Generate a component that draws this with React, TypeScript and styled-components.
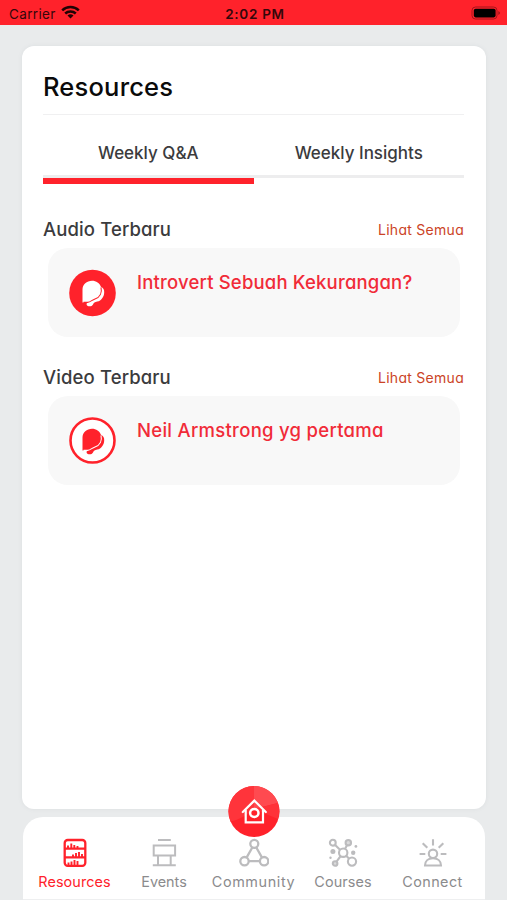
import React from "react";
import styled, { createGlobalStyle } from "styled-components";

const RED = "#ff222b";

const GlobalStyle = createGlobalStyle`
  * { box-sizing: border-box; }
  html, body { margin: 0; background: #e9ebec; }
  body {
    font-family: Inter, "Liberation Sans", sans-serif;
    font-feature-settings: "cv11" 1;
    color: #3b3b3d;
  }
  h1, h2, p { margin: 0; }
`;

const Screen = styled.div`
  width: 507px;
  height: 900px;
  overflow: hidden;
  display: flex;
  flex-direction: column;
  background: #e9ebec;
`;

const StatusBar = styled.header`
  height: 25px;
  flex: none;
  display: grid;
  grid-template-columns: 1fr auto 1fr;
  align-items: center;
  padding: 2px 6px 0 9px;
  background: ${RED};
  color: #35070a;
  font-size: 13.5px;
  line-height: 20px;
`;

const Carrier = styled.span`
  display: flex;
  align-items: center;
  gap: 5px;
  font-feature-settings: normal;
  letter-spacing: 0.35px;
  svg { margin-top: -3px; }
`;

const Clock = styled.span`
  font-weight: 600;
  font-size: 13.5px;
  letter-spacing: 0.7px;
`;

const Battery = styled.svg`
  justify-self: end;
  margin-top: -2px;
`;

const Sheet = styled.main`
  margin: 21px 22px 0;
  width: 463.5px;
  height: 763px;
  flex: none;
  padding: 0 21.5px 0 21px;
  background: #fff;
  border-radius: 12px;
  box-shadow: 0 0 4px rgba(120, 130, 135, 0.1);
`;

const Spaced = styled.span<{ $ls?: number }>`
  letter-spacing: ${(p) => p.$ls ?? 0}px;
  white-space: nowrap;
`;

const PageTitle = styled.h1`
  height: 69px;
  padding-top: 23px;
  border-bottom: 1px solid #f0f0f1;
  font-size: 25.5px;
  line-height: 36px;
  font-weight: 500;
  color: #0a0a0a;
`;

const Tabs = styled.nav`
  display: grid;
  grid-template-columns: 1fr 1fr;
  height: 69px;
`;

const Tab = styled.div<{ $active?: boolean }>`
  position: relative;
  height: 63px;
  padding-top: 25px;
  border-bottom: 3px solid #ededee;
  text-align: center;
  font-size: 17px;
  line-height: 26px;
  font-weight: 500;
  &::after {
    content: "";
    display: ${(p) => (p.$active ? "block" : "none")};
    position: absolute;
    left: 0;
    right: 0;
    bottom: -9px;
    height: 6px;
    background: ${RED};
  }
`;

const Section = styled.section`
  height: 148px;
  padding-top: 31px;
`;

const SectionHead = styled.div`
  display: flex;
  justify-content: space-between;
  align-items: center;
  height: 28px;
`;

const SectionTitle = styled.h2`
  font-size: 18.5px;
  line-height: 28px;
  font-weight: 500;
`;

const SeeAll = styled.span`
  padding-top: 1px;
  font-size: 14px;
  line-height: 20px;
  color: #cb4326;
`;

const MediaCard = styled.div`
  display: flex;
  gap: 20px;
  height: 89px;
  margin: 5px 4px 0 5px;
  padding: 21px 20px 0 21px;
  border-radius: 20px;
  background: #f8f8f8;
`;

const MediaTitle = styled.p`
  font-size: 18.5px;
  line-height: 26px;
  font-weight: 500;
  color: #f12b38;
`;

const BottomBar = styled.footer`
  position: relative;
  display: grid;
  grid-template-columns: repeat(5, 89.5px);
  justify-content: center;
  width: 462px;
  height: 83px;
  flex: none;
  margin: 8px 0 0 23px;
  padding: 20px 1px 0 0;
  background: #fff;
  border-radius: 20px 20px 0 0;
  border-bottom: 1px solid #eeeff0;
`;

const NavItem = styled.div<{ $active?: boolean }>`
  display: flex;
  flex-direction: column;
  align-items: center;
  gap: 2px;
  font-size: 14.4px;
  line-height: 21px;
  color: ${(p) => (p.$active ? RED : "#8b8b8d")};
  svg { color: ${(p) => (p.$active ? RED : "#bcbcbe")}; flex: none; }
`;

const HomeButton = styled.div`
  position: absolute;
  left: 205px;
  top: -31px;
  width: 52px;
  height: 52px;
`;

const Wifi = () => (
  <svg width="19" height="14" viewBox="0 0 19 14">
    <g fill="none" stroke="#210304" strokeWidth="2.5">
      <path d="M1.2 5.3a12 12 0 0 1 16.6 0" />
      <path d="M4.2 8.5a7.8 7.8 0 0 1 10.6 0" />
    </g>
    <path d="M6.5 10.6a4.4 4.4 0 0 1 6 0l-3 3z" fill="#210304" />
  </svg>
);

const Badge = ({ outline }: { outline?: boolean }) => {
  const ink = outline ? RED : "#fff";
  const ground = outline ? "#fff" : RED;
  return (
    <svg width="48" height="48" viewBox="0 0 48 48">
      {outline ? (
        <circle cx="23.5" cy="23.5" r="22" fill="#fff" stroke={RED} strokeWidth="2.6" />
      ) : (
        <circle cx="23.5" cy="24" r="23.3" fill={RED} />
      )}
      <path
        d="M13.500 33.5V20.500c0-5 4.300-8.700 9.500-8.700 4.200 0 7.700 2.400 8.900 6 2.400.9 3.500 3 3.300 5.600-.2 4.500-2.800 8-7 9.200-2.500.7-3.300 1-4.200 2.800-1 2-3.800 2.400-5.600 1.300-1.300-1-.9-2.200 0-3.200z"
        fill={ink}
      />
      <path
        d="M32 18.300c1.300 5.500-1 10-6 11.600-3.200 1-4.200 3.200-7.500 3.500h-4"
        fill="none"
        stroke={ground}
        strokeWidth="1.100"
      />
    </svg>
  );
};

const icon = {
  width: 30,
  height: 32,
  viewBox: "0 0 30 32",
  fill: "none",
  stroke: "currentColor",
  strokeWidth: 2,
} as const;

const ShelfIcon = () => (
  <svg {...icon} strokeWidth="2.300">
    <rect x="4.700" y="3" width="20.600" height="25.800" rx="3" />
    <path d="M4.700 11.700h20.600M4.700 20.300h20.600" />
    <path
      strokeWidth="1.900"
      d="M8 11V8.500M11.300 11V6.500M14.300 11V8M17.500 11V9M13 20v-2.500M16 20v-4M19 20v-5M22 20v-3M8.500 28v-2.500M11.500 28v-3.500M14.500 28v-5M17.500 28v-4"
    />
  </svg>
);

const BoothIcon = () => (
  <svg {...icon} strokeWidth="2">
    <path d="M9 3h12.800M4.700 8.500h21.400v10H4.700zM3.800 28.300h23M9 18.500v9.500M21.700 18.500v9.500" />
  </svg>
);

const CommunityIcon = () => (
  <svg {...icon} strokeWidth="2.300">
    <circle cx="15.300" cy="6.800" r="4" />
    <circle cx="5.500" cy="24.200" r="4.200" />
    <circle cx="25.100" cy="24.200" r="4.200" />
    <path d="M13.300 10.500 7.700 20.400M17.300 10.500l5.600 9.900M9.800 24.200h11" />
  </svg>
);

const CoursesIcon = () => (
  <svg {...icon} strokeWidth="2.100">
    <circle cx="15.200" cy="15.700" r="4.200" />
    <circle cx="4.800" cy="5.700" r="2.900" />
    <circle cx="20.300" cy="5.700" r="2.700" fill="currentColor" fillOpacity="0.55" />
    <circle cx="24" cy="24.600" r="4.100" />
    <circle cx="7.100" cy="26.500" r="2.300" fill="currentColor" fillOpacity="0.55" />
    <path d="m6.900 7.700 5.100 5M16.900 12l2-3.500M18.200 18.700l3 3M12.700 19l-4 5.300" />
    <g fill="currentColor" stroke="none">
      <circle cx="4.900" cy="14.500" r="2.500" />
      <circle cx="25.200" cy="15.800" r="2.200" />
      <circle cx="27.900" cy="9.400" r="1.400" />
      <circle cx="2.500" cy="20.800" r="1.200" />
    </g>
  </svg>
);

const ConnectIcon = () => (
  <svg {...icon} strokeWidth="2.100">
    <circle cx="15" cy="16.800" r="4.200" />
    <path d="M7 28.500c0-4.300 3.200-7.200 8-7.200s8 2.900 8 7.200zM15 2.300v6.300M4.700 6.200l4.600 4.600M25.300 6.200l-4.600 4.600M1.600 17h5.700M22.700 17h5.700" />
  </svg>
);

const HomeIcon = () => (
  <svg width="52" height="52" viewBox="0 0 52 52">
    <circle cx="26" cy="25.500" r="25.500" fill={RED} />
    <path d="M.5 24A25.500 25.500 0 0 1 26 0v23Q15 33 2.500 35.500A25.500 25.500 0 0 1 .5 24z" fill="#ff343b" />
    <path d="M26 0A25.500 25.500 0 0 1 50 17L26 23z" fill="#ff4a50" />
    <path d="M26 23 50 17a25.500 25.500 0 0 1 0 16z" fill="#ff3239" />
    <g fill="none" stroke="#fff" strokeWidth="2.200">
      <path d="M17.700 24v12.300h17.300V24" />
      <path d="m14.800 26 11.500-11.400L37.800 26" strokeLinecap="round" />
      <ellipse cx="26.300" cy="27" rx="4.200" ry="3.900" strokeWidth="2.500" />
    </g>
  </svg>
);

const sections = [
  { heading: "Audio Terbaru", title: "Introvert Sebuah Kekurangan?", titleLs: 0.18, outline: false },
  { heading: "Video Terbaru", title: "Neil Armstrong yg pertama", titleLs: 0.28, outline: true },
];

const navItems = [
  { label: "Resources", ls: 0.1, Icon: ShelfIcon, active: true },
  { label: "Events", ls: 0, Icon: BoothIcon },
  { label: "Community", ls: 0.6, Icon: CommunityIcon },
  { label: "Courses", ls: 0.1, Icon: CoursesIcon },
  { label: "Connect", ls: 0.4, Icon: ConnectIcon },
];

export default function App() {
  return (
    <>
      <GlobalStyle />
      <Screen>
        <StatusBar>
          <Carrier>
            Carrier
            <Wifi />
          </Carrier>
          <Clock>2:02 PM</Clock>
          <Battery width="30" height="14" viewBox="0 0 30 14">
            <rect x="1" y="1" width="25" height="12" rx="3.500" fill="none" stroke="#a3151b" />
            <rect x="2.800" y="2.800" width="21.800" height="8.600" rx="1.800" fill="#000" />
            <path d="M27.300 5v4q1.800-.8 1.800-2t-1.800-2z" fill="#a3151b" />
          </Battery>
        </StatusBar>
        <Sheet>
          <PageTitle>
            <Spaced $ls={0.2}>Resources</Spaced>
          </PageTitle>
          <Tabs>
            <Tab $active>
              <Spaced>Weekly Q&amp;A</Spaced>
            </Tab>
            <Tab>
              <Spaced>Weekly Insights</Spaced>
            </Tab>
          </Tabs>
          {sections.map((s) => (
            <Section key={s.heading}>
              <SectionHead>
                <SectionTitle>
                  <Spaced $ls={0.12}>{s.heading}</Spaced>
                </SectionTitle>
                <SeeAll>
                  <Spaced $ls={0.28}>Lihat Semua</Spaced>
                </SeeAll>
              </SectionHead>
              <MediaCard>
                <Badge outline={s.outline} />
                <MediaTitle>
                  <Spaced $ls={s.titleLs}>{s.title}</Spaced>
                </MediaTitle>
              </MediaCard>
            </Section>
          ))}
        </Sheet>
        <BottomBar>
          {navItems.map(({ label, ls, Icon, active }) => (
            <NavItem key={label} $active={active}>
              <Icon />
              <Spaced $ls={ls}>{label}</Spaced>
            </NavItem>
          ))}
          <HomeButton>
            <HomeIcon />
          </HomeButton>
        </BottomBar>
      </Screen>
    </>
  );
}
